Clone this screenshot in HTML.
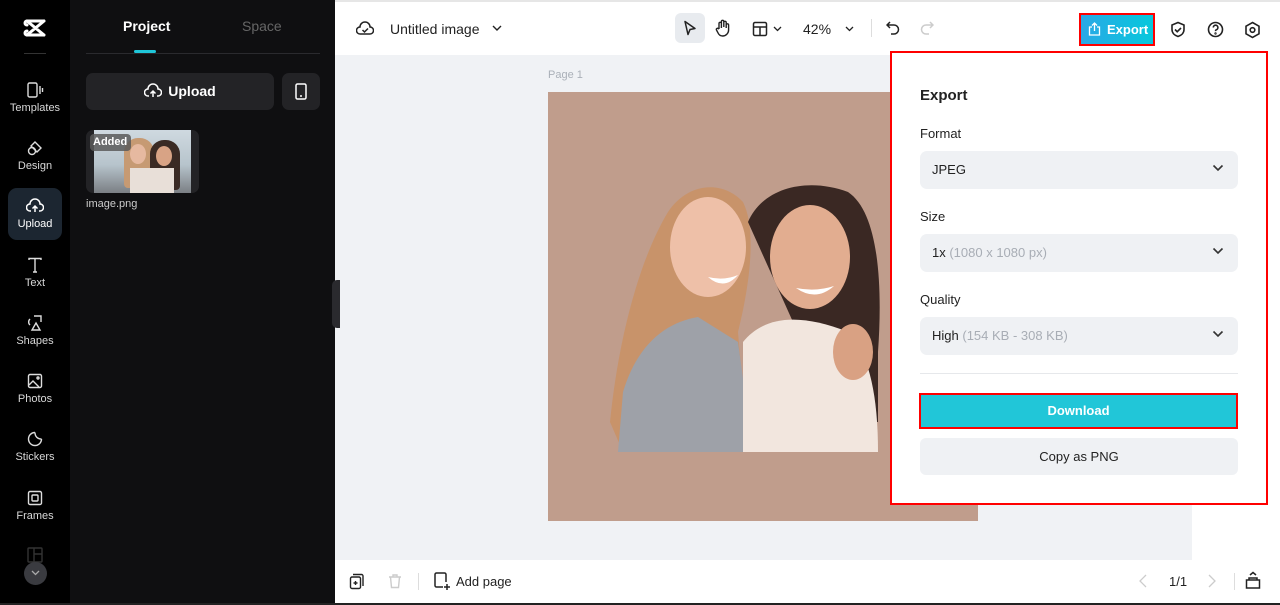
<!DOCTYPE html>
<html><head><meta charset="utf-8"><style>
*{margin:0;padding:0;box-sizing:border-box}
body{width:1280px;height:605px;overflow:hidden;font-family:"Liberation Sans",sans-serif;background:#f0f2f5;position:relative}
.abs{position:absolute}
.nav{left:0;top:0;width:70px;height:605px;background:#000}
.navi{position:absolute;left:8px;width:54px;text-align:center;color:#d8d8d8;font-size:11px}
.navi svg{display:block;margin:0 auto 3px}
.panel{left:70px;top:0;width:265px;height:605px;background:#0f0f11}
.top{left:335px;top:0;width:945px;height:55px;background:#fff;border-top:2px solid #e6e6e6}
.bot{left:335px;top:560px;width:945px;height:43px;background:#fff}
.sel{position:absolute;left:920px;width:318px;height:38px;background:#eff1f4;border-radius:7px;font-size:13px;color:#222;padding:11px 12px}
.sel .g{color:#a8adb5}
.chev{position:absolute;right:14px;top:13px}
.lbl{position:absolute;left:920px;font-size:13px;color:#222}
</style></head><body>
<!-- left nav -->
<div class="abs nav">
 <svg class="abs" style="left:23px;top:18px" width="24" height="20" viewBox="0 0 24 20"><path d="M4 3h17M4 17h17M4 3L21 17M4 17L21 3M4 3a2 2 0 0 0 0 4M4 17a2 2 0 0 1 0-4" stroke="#fff" stroke-width="3" fill="none" stroke-linecap="round" stroke-linejoin="round"/></svg>
 <div class="abs" style="left:24px;top:53px;width:22px;height:1px;background:#333"></div>
 <div class="navi" style="top:81px"><svg width="18" height="18" viewBox="0 0 18 18" fill="none" stroke="#ddd" stroke-width="1.4"><rect x="2" y="2" width="9" height="14" rx="1.5"/><path d="M14 5v8M16.5 7v4"/></svg>Templates</div>
 <div class="navi" style="top:139px"><svg width="18" height="18" viewBox="0 0 18 18" fill="none" stroke="#ddd" stroke-width="1.4"><circle cx="6" cy="12" r="3.5"/><path d="M9 3l6 6-4 4-6-6z"/></svg>Design</div>
 <div class="abs" style="left:8px;top:188px;width:54px;height:52px;background:#1c2631;border-radius:9px"></div>
 <div class="navi" style="top:197px;color:#fff"><svg width="18" height="18" viewBox="0 0 18 18" fill="none" stroke="#fff" stroke-width="1.5"><path d="M5 14H4a3.5 3.5 0 0 1 0-7 5 5 0 0 1 10 0 3.5 3.5 0 0 1 0 7h-1M9 15V9M6.5 11.5L9 9l2.5 2.5"/></svg>Upload</div>
 <div class="navi" style="top:256px"><svg width="18" height="18" viewBox="0 0 18 18" fill="none" stroke="#ddd" stroke-width="1.4"><path d="M3 4V2.5h12V4M9 2.5V16M7 16h4"/></svg>Text</div>
 <div class="navi" style="top:314px"><svg width="18" height="18" viewBox="0 0 18 18" fill="none" stroke="#ddd" stroke-width="1.4"><path d="M8 2h7v6M4 5a4 4 0 0 0 0 6M10 9l4 7H6z"/></svg>Shapes</div>
 <div class="navi" style="top:372px"><svg width="18" height="18" viewBox="0 0 18 18" fill="none" stroke="#ddd" stroke-width="1.4"><rect x="2.5" y="2.5" width="13" height="13" rx="1.5"/><path d="M3 13l4-4 6 6"/><circle cx="12" cy="6" r="1"/></svg>Photos</div>
 <div class="navi" style="top:430px"><svg width="18" height="18" viewBox="0 0 18 18" fill="none" stroke="#ddd" stroke-width="1.4"><path d="M15.5 9A6.5 6.5 0 1 1 9 2.5M9 2.5c0 4 2.5 6.5 6.5 6.5"/></svg>Stickers</div>
 <div class="navi" style="top:489px"><svg width="18" height="18" viewBox="0 0 18 18" fill="none" stroke="#ddd" stroke-width="1.4"><rect x="2.5" y="2.5" width="13" height="13" rx="1.5"/><rect x="6" y="6" width="6" height="6" rx="1"/></svg>Frames</div>
 <svg class="abs" style="left:27px;top:547px" width="16" height="16" viewBox="0 0 16 16" fill="none" stroke="#333" stroke-width="1.4"><rect x="1" y="1" width="14" height="14" rx="1"/><path d="M7 1v14M7 7h8"/></svg>
 <div class="abs" style="left:24px;top:562px;width:23px;height:23px;border-radius:50%;background:#3a3b40"></div>
 <svg class="abs" style="left:31px;top:570px" width="9" height="6" viewBox="0 0 9 6"><path d="M1 1l3.5 3.5L8 1" stroke="#aaa" stroke-width="1.3" fill="none"/></svg>
</div>
<!-- panel -->
<div class="abs panel">
 <div class="abs" style="left:53px;top:18px;color:#fff;font-weight:bold;font-size:14px">Project</div>
 <div class="abs" style="left:172px;top:18px;color:#666;font-size:14px">Space</div>
 <div class="abs" style="left:64px;top:50px;width:22px;height:3px;background:#1fc6d9;border-radius:2px"></div>
 <div class="abs" style="left:16px;top:53px;width:234px;height:1px;background:#2a2a2e"></div>
 <div class="abs" style="left:16px;top:73px;width:188px;height:37px;background:#232326;border-radius:7px;color:#fff;font-weight:bold;font-size:14px;text-align:center;line-height:37px"><svg style="vertical-align:-3px;margin-right:6px" width="18" height="16" viewBox="0 0 18 16" fill="none" stroke="#fff" stroke-width="1.5"><path d="M5 13H4a3.5 3.5 0 0 1 0-7 5 5 0 0 1 10 0 3.5 3.5 0 0 1 0 7h-1M9 14V8M6.5 10.5L9 8l2.5 2.5"/></svg>Upload</div>
 <div class="abs" style="left:212px;top:73px;width:38px;height:37px;background:#232326;border-radius:7px"><svg style="margin:10px 0 0 13px" width="12" height="17" viewBox="0 0 12 17" fill="none" stroke="#fff" stroke-width="1.5"><rect x="1" y="1" width="10" height="15" rx="1.5"/><path d="M5 13h2"/></svg></div>
 <div class="abs" style="left:16px;top:130px;width:113px;height:63px;background:#232326;border-radius:7px;overflow:hidden">
  <div class="abs" style="left:8px;top:0;width:97px;height:63px;background:linear-gradient(180deg,#cfd9e0 0%,#b7c4cc 55%,#7b7f84 100%)"></div>
  <div class="abs" style="left:38px;top:8px;width:30px;height:50px;border-radius:14px 14px 4px 4px;background:#c69a73"></div>
  <div class="abs" style="left:64px;top:10px;width:30px;height:50px;border-radius:14px 14px 4px 4px;background:#3a2a24"></div>
  <div class="abs" style="left:44px;top:14px;width:16px;height:20px;border-radius:50%;background:#e6b9a0"></div>
  <div class="abs" style="left:70px;top:16px;width:16px;height:20px;border-radius:50%;background:#d8a385"></div>
  <div class="abs" style="left:44px;top:38px;width:44px;height:25px;background:#e8dfd8"></div>
  <div class="abs" style="left:4px;top:4px;width:41px;height:17px;background:rgba(90,90,90,.85);border-radius:4px;color:#fff;font-size:11px;font-weight:bold;line-height:17px;padding-left:3px">Added</div>
 </div>
 <div class="abs" style="left:16px;top:198px;color:#ccc;font-size:11px">image.png</div>
 <div class="abs" style="left:262px;top:280px;width:8px;height:48px;background:#2a2a2e;border-radius:5px 0 0 5px"></div>
</div>
<!-- top bar -->
<div class="abs top">
 <svg class="abs" style="left:21px;top:18px" width="18" height="16" viewBox="0 0 18 16" fill="none" stroke="#222" stroke-width="1.5"><path d="M5 14H4a3.5 3.5 0 0 1 0-7 5 5 0 0 1 10 0 3.5 3.5 0 0 1 0 7H5zM6.5 10l2 2 3.5-3.5"/></svg>
 <div class="abs" style="left:55px;top:19px;font-size:14px;color:#222">Untitled image</div>
 <svg class="abs" style="left:157px;top:23px" width="10" height="6" viewBox="0 0 10 6"><path d="M1 1l4 4 4-4" stroke="#222" stroke-width="1.4" fill="none"/></svg>
 <div class="abs" style="left:340px;top:11px;width:30px;height:30px;background:#e8ebef;border-radius:6px"></div>
 <svg class="abs" style="left:348px;top:18px" width="14" height="16" viewBox="0 0 14 16"><path d="M2 1.5l10 7-5 1-2 5z" stroke="#222" stroke-width="1.5" fill="none" stroke-linejoin="round"/></svg>
 <svg class="abs" style="left:380px;top:17px" width="16" height="18" viewBox="0 0 16 18" fill="none" stroke="#222" stroke-width="1.4"><path d="M4 10V4.5a1.2 1.2 0 0 1 2.4 0V9M6.4 8V2.5a1.2 1.2 0 0 1 2.4 0V8M8.8 8V3.5a1.2 1.2 0 0 1 2.4 0V9M11.2 9V6a1.2 1.2 0 0 1 2.4 0v5a6 6 0 0 1-6 6 5 5 0 0 1-4.5-3L1.5 11a1.2 1.2 0 0 1 2-1.3L4 10"/></svg>
 <svg class="abs" style="left:417px;top:19px" width="16" height="16" viewBox="0 0 16 16" fill="none" stroke="#222" stroke-width="1.5"><rect x="1.5" y="1.5" width="13" height="13" rx="1.5"/><path d="M1.5 6h13M8 6v8.5"/></svg>
 <svg class="abs" style="left:438px;top:24px" width="9" height="6" viewBox="0 0 9 6"><path d="M1 1l3.5 3.5L8 1" stroke="#222" stroke-width="1.3" fill="none"/></svg>
 <div class="abs" style="left:468px;top:19px;font-size:14px;color:#222">42%</div>
 <svg class="abs" style="left:510px;top:24px" width="9" height="6" viewBox="0 0 9 6"><path d="M1 1l3.5 3.5L8 1" stroke="#222" stroke-width="1.3" fill="none"/></svg>
 <div class="abs" style="left:536px;top:17px;width:1px;height:18px;background:#ddd"></div>
 <svg class="abs" style="left:551px;top:19px" width="14" height="14" viewBox="0 0 14 14" fill="none" stroke="#222" stroke-width="1.5"><path d="M4 1L1 4l3 3M1 4h7a4.5 4.5 0 0 1 0 9H5"/></svg>
 <svg class="abs" style="left:585px;top:19px" width="14" height="14" viewBox="0 0 14 14" fill="none" stroke="#ccc" stroke-width="1.5"><path d="M10 1l3 3-3 3M13 4H6a4.5 4.5 0 0 0 0 9h3"/></svg>
 <div class="abs" style="left:744px;top:11px;width:76px;height:33px;border:2px solid #f00;background:linear-gradient(90deg,#2aa8e6,#06c8dc);color:#fff;font-weight:bold;font-size:13px;line-height:29px;padding-left:26px">Export</div>
 <svg class="abs" style="left:753px;top:20px" width="13" height="14" viewBox="0 0 13 14" fill="none" stroke="#fff" stroke-width="1.3"><path d="M4 5H1.5v8h10V5H9M6.5 9V1M4 3.5L6.5 1 9 3.5"/></svg>
 <svg class="abs" style="left:835px;top:19px" width="16" height="17" viewBox="0 0 16 17" fill="none" stroke="#222" stroke-width="1.6"><path d="M8 1.5l6 2.5v4.5c0 3.5-2.7 6-6 7-3.3-1-6-3.5-6-7V4zM5 8.5l2.2 2.2L11 7"/></svg>
 <svg class="abs" style="left:872px;top:19px" width="17" height="17" viewBox="0 0 17 17" fill="none" stroke="#222" stroke-width="1.6"><circle cx="8.5" cy="8.5" r="7"/><path d="M6.3 6.5a2.3 2.3 0 1 1 3 2.2c-.6.3-.8.7-.8 1.4"/><circle cx="8.5" cy="12.5" r=".4" fill="#222"/></svg>
 <svg class="abs" style="left:909px;top:19px" width="17" height="18" viewBox="0 0 17 18" fill="none" stroke="#222" stroke-width="1.6"><path d="M8.5 1.5l6.5 3.7v7.6l-6.5 3.7-6.5-3.7V5.2z"/><circle cx="8.5" cy="9" r="2.3"/></svg>
</div>
<!-- canvas -->
<div class="abs" style="left:548px;top:69px;font-size:11px;color:#aab0b8">Page 1</div>
<div class="abs" style="left:1192px;top:55px;width:88px;height:505px;background:#fff"></div>
<div class="abs" style="left:548px;top:92px;width:430px;height:429px;background:#c09d8c;overflow:hidden">
 <svg width="430" height="429" viewBox="0 0 430 429">
  <path d="M62 330 C70 250 90 170 120 120 C140 90 175 88 195 110 C210 140 200 200 190 240 L200 360 L75 360 Z" fill="#c8936a"/>
  <path d="M200 130 C215 95 260 85 300 100 C330 120 335 190 330 260 L330 330 L290 330 Z" fill="#3a2823"/>
  <ellipse cx="160" cy="155" rx="38" ry="50" fill="#eec0a8"/>
  <ellipse cx="262" cy="165" rx="40" ry="52" fill="#e2ad90"/>
  <path d="M160 185 q16 14 30 -2 q-14 6 -30 2z" fill="#fff"/>
  <path d="M248 196 q20 14 38 -2 q-18 6 -38 2z" fill="#fff"/>
  <path d="M75 300 C90 250 120 230 150 225 L190 250 L205 360 L70 360 Z" fill="#9ea1a8"/>
  <path d="M195 250 C215 225 250 220 300 240 C320 260 330 300 330 360 L195 360 Z" fill="#f2e6de"/>
  <ellipse cx="305" cy="260" rx="20" ry="28" fill="#d9a183"/>
  <rect x="0" y="360" width="430" height="69" fill="#c09d8c"/>
 </svg>
</div>
<!-- export panel -->
<div class="abs" style="left:890px;top:51px;width:378px;height:454px;border:2px solid #f00;background:#fff"></div>
<div class="abs" style="left:920px;top:87px;font-size:15px;font-weight:bold;color:#222">Export</div>
<div class="lbl" style="top:126px">Format</div>
<div class="sel" style="top:151px">JPEG<svg class="chev" width="12" height="8" viewBox="0 0 12 8"><path d="M1.5 1.5L6 6l4.5-4.5" stroke="#333" stroke-width="1.6" fill="none"/></svg></div>
<div class="lbl" style="top:209px">Size</div>
<div class="sel" style="top:234px">1x <span class="g">(1080 x 1080 px)</span><svg class="chev" width="12" height="8" viewBox="0 0 12 8"><path d="M1.5 1.5L6 6l4.5-4.5" stroke="#333" stroke-width="1.6" fill="none"/></svg></div>
<div class="lbl" style="top:292px">Quality</div>
<div class="sel" style="top:317px">High <span class="g">(154 KB - 308 KB)</span><svg class="chev" width="12" height="8" viewBox="0 0 12 8"><path d="M1.5 1.5L6 6l4.5-4.5" stroke="#333" stroke-width="1.6" fill="none"/></svg></div>
<div class="abs" style="left:920px;top:373px;width:318px;height:1px;background:#e6e8eb"></div>
<div class="abs" style="left:919px;top:393px;width:319px;height:36px;border:2px solid #f00;background:#21c6d8;color:#fff;font-weight:bold;font-size:13px;text-align:center;line-height:32px">Download</div>
<div class="abs" style="left:920px;top:438px;width:318px;height:37px;background:#eff1f4;border-radius:6px;color:#222;font-size:13px;text-align:center;line-height:37px">Copy as PNG</div>
<!-- bottom bar -->
<div class="abs bot">
 <svg class="abs" style="left:14px;top:13px" width="16" height="17" viewBox="0 0 16 17" fill="none" stroke="#222" stroke-width="1.4"><rect x="1.5" y="4" width="10" height="11.5" rx="1.5"/><path d="M4 1.5h8.5a1.5 1.5 0 0 1 1.5 1.5v10M6.5 8v4M4.5 10h4"/></svg>
 <svg class="abs" style="left:53px;top:13px" width="14" height="16" viewBox="0 0 14 16" fill="none" stroke="#ccc" stroke-width="1.4"><path d="M1 4h12M5 4V2h4v2M2.5 4l1 10.5h7l1-10.5"/></svg>
 <div class="abs" style="left:83px;top:13px;width:1px;height:17px;background:#ddd"></div>
 <svg class="abs" style="left:99px;top:12px" width="17" height="19" viewBox="0 0 17 19" fill="none" stroke="#222" stroke-width="1.5"><path d="M9 15H2.5A1.5 1.5 0 0 1 1 13.5v-11A1.5 1.5 0 0 1 2.5 1h8A1.5 1.5 0 0 1 12 2.5V10M13 12v6M10 15h6"/></svg>
 <div class="abs" style="left:121px;top:14px;font-size:13px;color:#222">Add page</div>
 <svg class="abs" style="left:804px;top:14px" width="8" height="14" viewBox="0 0 8 14"><path d="M7 1L1 7l6 6" stroke="#ccc" stroke-width="1.3" fill="none"/></svg>
 <div class="abs" style="left:834px;top:14px;font-size:13px;color:#222">1/1</div>
 <svg class="abs" style="left:873px;top:14px" width="8" height="14" viewBox="0 0 8 14"><path d="M1 1l6 6-6 6" stroke="#ccc" stroke-width="1.3" fill="none"/></svg>
 <div class="abs" style="left:899px;top:13px;width:1px;height:17px;background:#ddd"></div>
 <svg class="abs" style="left:910px;top:11px" width="16" height="19" viewBox="0 0 16 19" fill="none" stroke="#222" stroke-width="1.5"><path d="M5 4l3-2.5L11 4M1.5 9h13v8h-13zM4 9V7h8v2"/></svg>
</div>
<div class="abs" style="left:0;top:603px;width:1280px;height:2px;background:#222"></div>
</body></html>
